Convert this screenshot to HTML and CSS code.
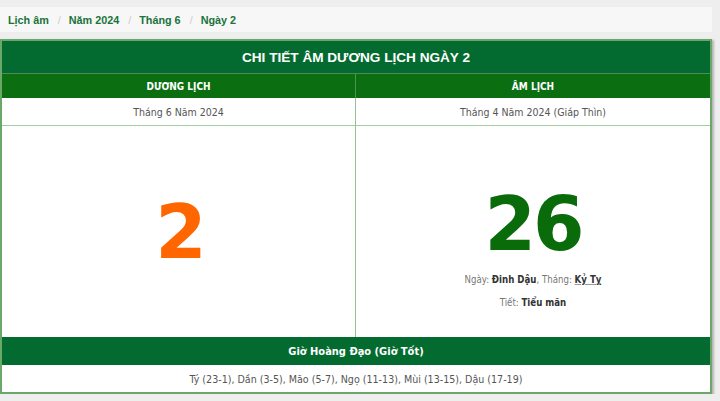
FILE: index.html
```html
<!DOCTYPE html>
<html>
<head>
<meta charset="utf-8">
<link rel="stylesheet" href="styles.css">
</head>
<body>
<div class="page">
  <nav class="crumbs">
    <a>Lịch âm</a><span class="sep">/</span>
    <a>Năm 2024</a><span class="sep">/</span>
    <a>Tháng 6</a><span class="sep">/</span>
    <a>Ngày 2</a>
  </nav>
  <div class="card">
    <div class="title">CHI TIẾT ÂM DƯƠNG LỊCH NGÀY 2</div>
    <div class="grid">
      <div class="head">DƯƠNG LỊCH</div>
      <div class="head">ÂM LỊCH</div>
      <div class="cell">Tháng 6 Năm 2024</div>
      <div class="cell">Tháng 4 Năm 2024 (Giáp Thìn)</div>
      <div class="big solar"><span class="num">2</span></div>
      <div class="big lunar">
        <span class="num">26</span>
        <p class="info">Ngày: <b>Đinh Dậu</b>, Tháng: <b class="u">Kỷ Tỵ</b></p>
        <p class="info">Tiết: <b>Tiểu mãn</b></p>
      </div>
    </div>
    <div class="subtitle">Giờ Hoàng Đạo (Giờ Tốt)</div>
    <div class="hours">Tý (23-1), Dần (3-5), Mão (5-7), Ngọ (11-13), Mùi (13-15), Dậu (17-19)</div>
  </div>
</div>
</body>
</html>
```
FILE: styles.css
```css
html, body { margin: 0; padding: 0; }
body { background: #eeeeee; font-family: "DejaVu Sans Condensed", "DejaVu Sans", Verdana, sans-serif; }
.page { width: 712px; padding-top: 7px; }
.crumbs {
  height: 25px; background: #f7f7f7; display: flex; align-items: center;
  padding-left: 8px; font-family: "Liberation Sans", Arial, sans-serif;
  font-size: 10.8px; font-weight: bold;
}
.crumbs a { color: #19733b; }
.crumbs .sep { color: #cccccc; font-weight: normal; padding: 0 8px 0 9px; }
.card {
  margin-top: 7px; background: #fff; border: 2px solid #6aa86a;
  box-shadow: 2px 1px 2px #b5b5b5;
}
.title {
  background: #046b30; color: #fff; height: 32px; display: flex;
  align-items: center; justify-content: center;
  font-family: "Liberation Sans", Arial, sans-serif; font-weight: bold; font-size: 13.6px;
  border-bottom: 1px solid #4f8a5c;
}
.grid { display: grid; grid-template-columns: 354px 1fr; }
.head {
  background: #0b6f11; color: #fff; height: 24px; display: flex;
  align-items: center; justify-content: center; font-size: 10px; font-weight: bold;
}
.head:first-child { border-right: 1px solid #4c9350; }
.cell {
  height: 27px; display: flex; align-items: center; justify-content: center;
  font-size: 10.5px; color: #555; border-bottom: 1px solid #9fcf9f;
}
.cell:nth-child(3), .big.solar { border-right: 1px solid #8fc58f; }
.big {
  height: 211px; display: flex; flex-direction: column; align-items: center;
  justify-content: center;
}
.num {
  font-family: "DejaVu Sans", Verdana, sans-serif; font-weight: bold; font-size: 74px;
  line-height: 1; letter-spacing: -3px;
}
.solar .num { color: #ff6600; padding-left: 2px; }
.lunar { justify-content: flex-start; padding-top: 61px; box-sizing: border-box; }
.lunar .num { color: #0a6b0a; }
.info { margin: 0; font-size: 9.6px; color: #777; margin-top: 13px; }
.info + .info { margin-top: 12px; }
.info b { color: #333; }
.info .u { text-decoration: underline; text-decoration-color: #999; }
.subtitle {
  background: #046b30; color: #fff; height: 28px; display: flex; align-items: center;
  justify-content: center; font-size: 11px; font-weight: bold;
}
.hours {
  height: 27px; display: flex; align-items: center; justify-content: center;
  font-size: 10.6px; color: #555;
}
```
